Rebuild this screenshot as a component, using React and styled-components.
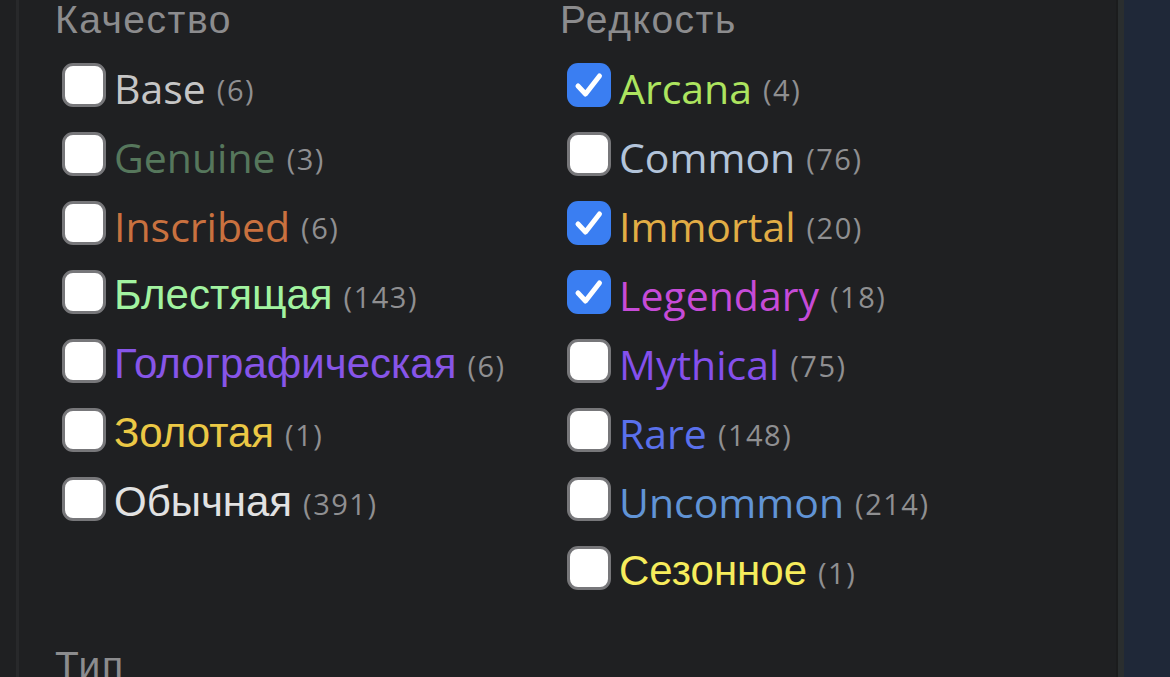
import React from "react";
import styled, { createGlobalStyle } from "styled-components";

const GlobalStyle = createGlobalStyle`
  html, body {
    margin: 0;
    padding: 0;
    background-color: #1f2022;
    overflow: hidden;
  }
`;

const quality = [
  { name: "Base", count: 6, color: "#c6c6c6" },
  { name: "Genuine", count: 3, color: "#56775c" },
  { name: "Inscribed", count: 6, color: "#c9713f" },
  { name: "Блестящая", count: 143, color: "#a2f3a0" },
  { name: "Голографическая", count: 6, color: "#8755e8" },
  { name: "Золотая", count: 1, color: "#ebc845" },
  { name: "Обычная", count: 391, color: "#e2e2e2" },
];

const rarity = [
  { name: "Arcana", count: 4, color: "#ade45f", checked: true },
  { name: "Common", count: 76, color: "#b3c4da" },
  { name: "Immortal", count: 20, color: "#e2ad45", checked: true },
  { name: "Legendary", count: 18, color: "#c64bd8", checked: true },
  { name: "Mythical", count: 75, color: "#8550ec" },
  { name: "Rare", count: 148, color: "#5a70ec" },
  { name: "Uncommon", count: 214, color: "#6194d6" },
  { name: "Сезонное", count: 1, color: "#f6ec5c" },
];

// cyrillic names come out in an arial-like face in the original
const isCyrillic = (s) => /[\u0400-\u04FF]/.test(s);

const Check = ({ checked }) => (
  <Box $checked={checked}>
    {checked && (
      <svg width="44" height="44" viewBox="0 0 44 44">
        <path
          d="M11 23 L18.5 31 L32.5 13"
          fill="none"
          stroke="#fff"
          strokeWidth="5"
          strokeLinecap="round"
          strokeLinejoin="round"
        />
      </svg>
    )}
  </Box>
);

const FilterGroup = ({ title, items }) => (
  <Group>
    <Heading>{title}</Heading>
    <List>
      {items.map((item) => (
        <Row key={item.name}>
          <Check checked={item.checked} />
          <Label $color={item.color} $cyr={isCyrillic(item.name)}>
            {item.name}
          </Label>
          <Count>({item.count})</Count>
        </Row>
      ))}
    </List>
  </Group>
);

const App = () => {
  return (
    <>
      <GlobalStyle />
      <Page>
        <Panel>
          <Columns>
            <FilterGroup title="Качество" items={quality} />
            <FilterGroup title="Редкость" items={rarity} />
          </Columns>
          <Section>
            <Heading>Тип</Heading>
          </Section>
        </Panel>
        <Divider />
        <SideArea />
      </Page>
    </>
  );
};

const Page = styled.div`
  display: flex;
  width: 1170px;
  height: 677px;
  padding-left: 16px;
  box-sizing: border-box;
  background-color: #1f2022;
`;

const Panel = styled.div`
  flex: 1;
  border-left: 3px solid #28292b;
  padding-left: 36px;
  background-color: #1f2022;
  font-family: "Open Sans", "Liberation Sans", sans-serif;
`;

const Columns = styled.div`
  display: grid;
  grid-template-columns: 505px 1fr;
`;

const Group = styled.div`
  display: flex;
  flex-direction: column;
`;

const Heading = styled.div`
  font-family: "Liberation Sans", sans-serif;
  font-size: 39px;
  letter-spacing: 1.5px;
  line-height: 40px;
  color: #8c8c8e;
`;

const List = styled.div`
  display: flex;
  flex-direction: column;
  gap: 21px;
  margin-top: 24px;
`;

const Row = styled.div`
  display: flex;
  align-items: center;
  height: 48px;
  padding-left: 7px;
`;

const Box = styled.div`
  width: 44px;
  height: 44px;
  flex-shrink: 0;
  box-sizing: border-box;
  margin-top: -6px;
  margin-right: 8px;
  border-radius: 11px;
  border: ${(p) => (p.$checked ? "none" : "3px solid #77777a")};
  background-color: ${(p) => (p.$checked ? "#3a7ef2" : "#ffffff")};
  display: flex;
  align-items: center;
  justify-content: center;
`;

const Label = styled.span`
  font-family: ${(p) =>
    p.$cyr ? `"Liberation Sans", sans-serif` : `"Open Sans", sans-serif`};
  font-size: ${(p) => (p.$cyr ? "42px" : "41px")};
  line-height: 48px;
  color: ${(p) => p.$color};
`;

const Count = styled.span`
  margin-left: 11px;
  font-size: 29px;
  letter-spacing: 1.5px;
  line-height: 48px;
  color: #8f8f91;
  padding-top: 4px;
`;

const Section = styled.div`
  margin-top: 51px;
`;

const Divider = styled.div`
  width: 8px;
  border-left: 2px solid #1b1c1d;
  box-sizing: border-box;
  background-color: #2a2e2f;
`;

const SideArea = styled.div`
  width: 46px;
  background-color: #1f2838;
`;

export default App;
